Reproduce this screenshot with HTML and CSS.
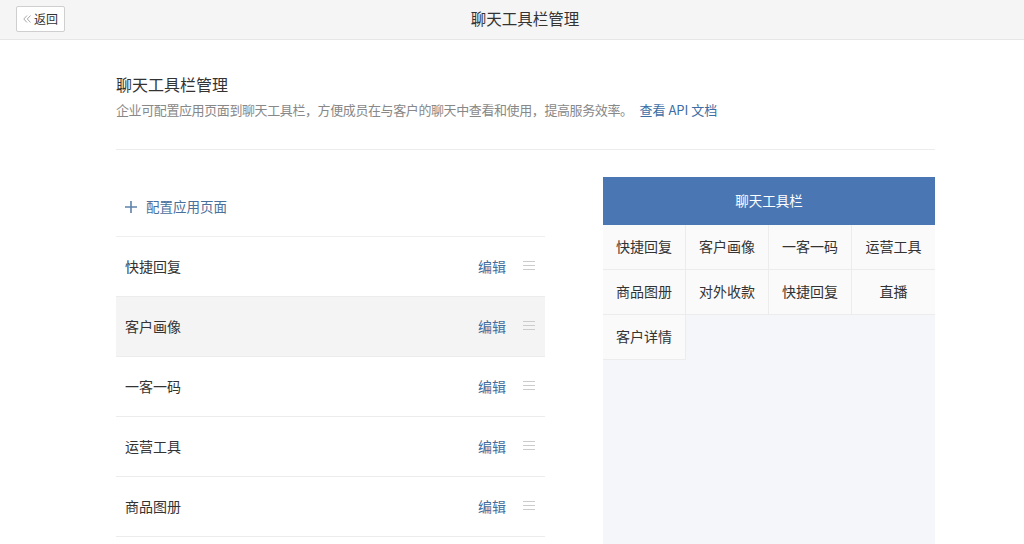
FILE: index.html
```html
<!DOCTYPE html>
<html lang="zh-CN">
<head>
<meta charset="utf-8">
<title>聊天工具栏管理</title>
<link rel="stylesheet" href="styles.css">
</head>
<body>
<header class="topbar">
  <button class="back"><svg class="back-arrow" width="8" height="8" viewBox="0 0 8 8"><path d="M4 0.5L0.8 4L4 7.5M7.5 0.5L4.3 4L7.5 7.5" fill="none" stroke="#a8a8a8" stroke-width="1"/></svg><span>返回</span></button>
  <div class="topbar-title">聊天工具栏管理</div>
</header>
<main class="main">
  <section class="intro">
    <h1 class="intro-title">聊天工具栏管理</h1>
    <p class="intro-desc"><span class="desc-text">企业可配置应用页面到聊天工具栏，方便成员在与客户的聊天中查看和使用，提高服务效率。</span> <a class="link" href="#">查看 API 文档</a></p>
  </section>
  <section class="content">
    <div class="list">
      <div class="add-row">
        <svg class="plus" width="12" height="12" viewBox="0 0 12 12"><path d="M6 0v12M0 6h12" stroke="#5f82ab" stroke-width="1.6"/></svg>
        <span>配置应用页面</span>
      </div>
      <div class="row"><span class="row-name">快捷回复</span><a class="edit" href="#">编辑</a><span class="drag"></span></div>
      <div class="row row-hover"><span class="row-name">客户画像</span><a class="edit" href="#">编辑</a><span class="drag"></span></div>
      <div class="row"><span class="row-name">一客一码</span><a class="edit" href="#">编辑</a><span class="drag"></span></div>
      <div class="row"><span class="row-name">运营工具</span><a class="edit" href="#">编辑</a><span class="drag"></span></div>
      <div class="row"><span class="row-name">商品图册</span><a class="edit" href="#">编辑</a><span class="drag"></span></div>
    </div>
    <div class="panel">
      <div class="panel-head">聊天工具栏</div>
      <div class="grid">
        <div class="cell">快捷回复</div>
        <div class="cell">客户画像</div>
        <div class="cell">一客一码</div>
        <div class="cell">运营工具</div>
        <div class="cell">商品图册</div>
        <div class="cell">对外收款</div>
        <div class="cell">快捷回复</div>
        <div class="cell">直播</div>
        <div class="cell">客户详情</div>
      </div>
    </div>
  </section>
</main>
</body>
</html>
```
FILE: styles.css
```css
* { box-sizing: border-box; }
html, body { margin: 0; padding: 0; }
body {
  font-family: "Noto Sans CJK SC", "Noto Sans", sans-serif;
  color: #333;
  background: #fff;
  width: 1024px;
  height: 544px;
  overflow: hidden;
}
.topbar {
  height: 40px;
  background: #f5f5f5;
  border-bottom: 1px solid #e6e6e6;
  display: flex;
  align-items: center;
  justify-content: center;
  position: relative;
}
.back {
  position: absolute;
  left: 16px;
  top: 6px;
  width: 49px;
  height: 26px;
  padding: 0;
  border: 1px solid #cfcfcf;
  border-radius: 2px;
  background: #fff;
  font-family: inherit;
  font-size: 12px;
  color: #333;
  display: flex;
  align-items: center;
  justify-content: center;
  gap: 3px;
  line-height: 1;
}
.back-arrow { display: block; }
.topbar-title { font-size: 15.5px; color: #333; margin-top: -3px; margin-left: 26px; }
.main {
  width: 819px;
  margin: 0 0 0 116px;
}
.intro {
  padding-top: 32px;
  padding-bottom: 29px;
  border-bottom: 1px solid #ececec;
}
.intro-title {
  margin: 0;
  font-size: 16px;
  font-weight: normal;
  line-height: 24px;
  color: #333;
}
.intro-desc {
  margin: 4px 0 0;
  font-size: 13px;
  line-height: 20px;
  color: #888;
}
.desc-text { letter-spacing: -0.4px; }
.link { color: #3c6da4; text-decoration: none; margin-left: 4px; }
.content {
  display: flex;
  justify-content: space-between;
  padding-top: 27px;
}
.list { width: 429px; }
.add-row {
  height: 60px;
  display: flex;
  align-items: center;
  gap: 9px;
  padding-left: 9px;
  padding-bottom: 2px;
  font-size: 13.5px;
  color: #4a6f9b;
  border-bottom: 1px solid #efefef;
}
.plus { display: block; margin-top: 2px; }
.row {
  height: 60px;
  display: flex;
  align-items: center;
  padding: 0 9px 2px;
  border-bottom: 1px solid #ececec;
  font-size: 14px;
}
.row-hover { background: #f4f4f4; }
.row-name { flex: 1; color: #333; }
.edit { color: #456d9c; text-decoration: none; font-size: 14px; margin-right: 1px; }
.drag {
  width: 12px;
  height: 9px;
  margin-left: 16px;
  margin-right: 1px;
  border-top: 1px solid #ccc;
  border-bottom: 1px solid #ccc;
  background: linear-gradient(#ccc, #ccc) center / 100% 1px no-repeat;
}
.panel {
  width: 332px;
  height: 380px;
  background: #f5f6fa;
}
.panel-head {
  height: 48px;
  padding-bottom: 2px;
  background: #4a77b4;
  color: #fff;
  font-size: 13.5px;
  display: flex;
  align-items: center;
  justify-content: center;
}
.grid {
  display: grid;
  grid-template-columns: repeat(4, 83px);
  grid-auto-rows: 45px;
}
.cell {
  background: #fafafa;
  border-right: 1px solid #ececec;
  border-bottom: 1px solid #ececec;
  display: flex;
  align-items: center;
  justify-content: center;
  padding-bottom: 2px;
  font-size: 14px;
  color: #333;
}
.cell:nth-child(4n) { border-right: none; }
```
